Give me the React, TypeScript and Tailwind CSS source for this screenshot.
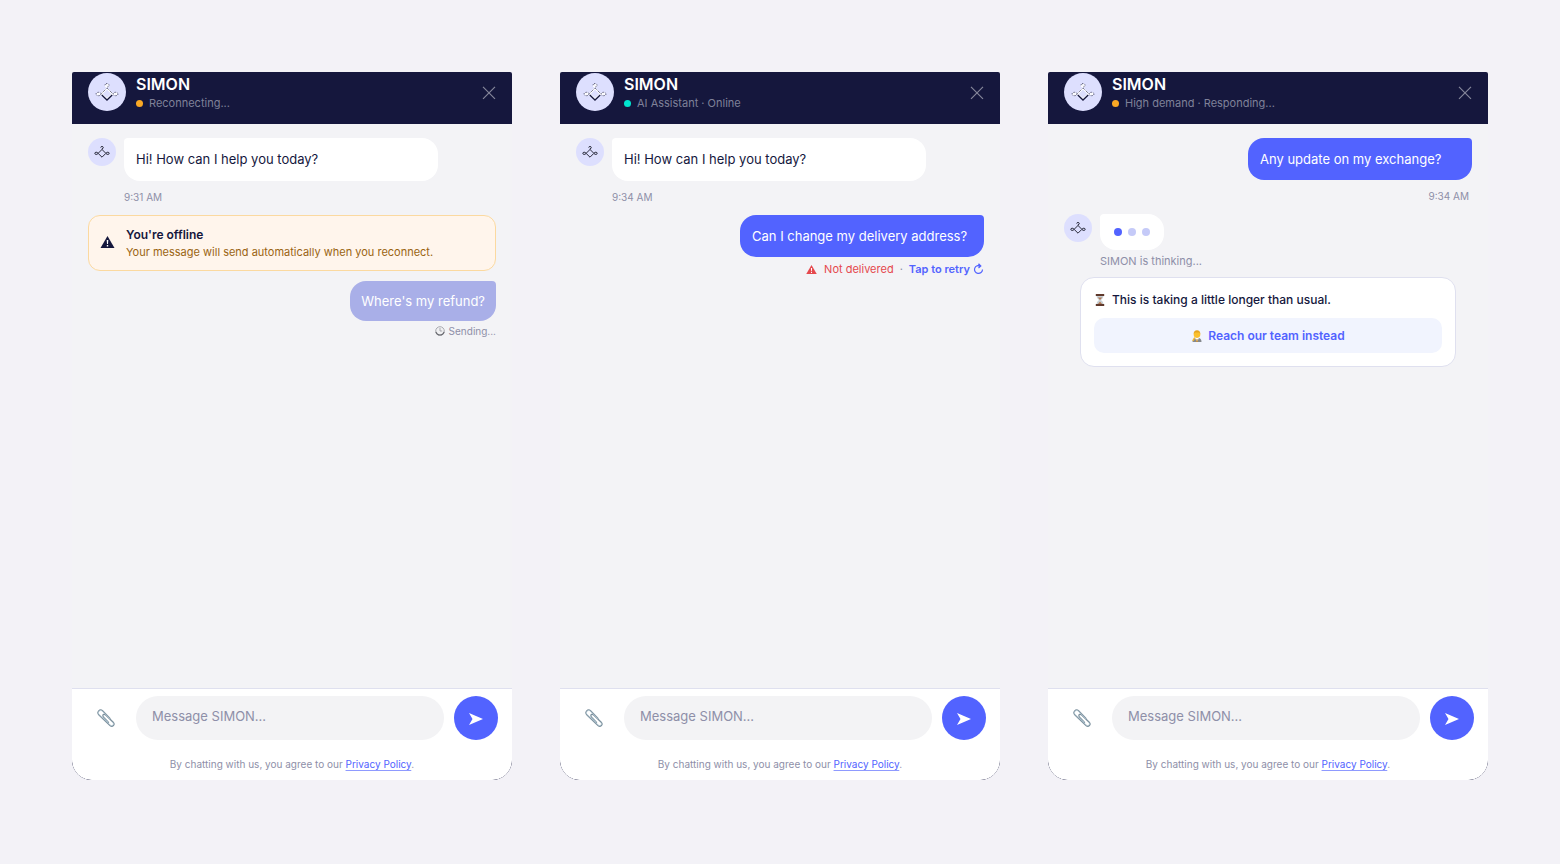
import type { ReactNode } from "react";
import clsx from "clsx";

type WidgetProps = {
  status: string;
  online?: boolean;
  children: ReactNode;
};

function Hanger({ className }: { className?: string }) {
  return (
    <svg viewBox="0 0 24 20" fill="none" stroke="#2a2b3c" strokeWidth="1.5" className={className}>
      <path d="M12 6.200 17.800 12 12 17.800 6.200 12z" />
      <path d="M12 6.200V5.200c1.300-.2 2-.9 2-1.800 0-1-.9-1.700-2-1.700s-2 .7-2 1.600" />
      <path d="M6.200 12c-1-1.300-2-1.700-3-1.700-1.200 0-2 .8-2 1.700s.8 1.700 2 1.700c1 0 2-.4 3-1.700z" />
      <path d="M17.800 12c1-1.300 2-1.700 3-1.700 1.200 0 2 .8 2 1.700s-.8 1.700-2 1.700c-1 0-2-.4-3-1.700z" />
    </svg>
  );
}

function HeaderLogo() {
  return (
    <svg viewBox="0 0 24 20" fill="none" className="w-6 h-5" aria-hidden="true">
      <g stroke="#fff" strokeWidth="1.600">
        <path d="M12 6.500 17.500 12 12 17 6.500 12z" />
        <ellipse cx="12" cy="3.500" rx="1.400" ry="1.200" />
        <ellipse cx="3.500" cy="12" rx="1.600" ry="1" />
        <ellipse cx="20.500" cy="12" rx="1.600" ry="1" />
      </g>
      <g stroke="#15173d" strokeWidth=".8" strokeDasharray="1 1">
        <path d="M6.500 11.500 12 6l5.500 5.500" />
        <path d="M10 3.200c0-1 .8-1.600 2-1.600s2 .6 2 1.600-1 1.700-2 2" />
        <ellipse cx="3.500" cy="12" rx="2.400" ry="1.700" />
        <ellipse cx="20.500" cy="12" rx="2.400" ry="1.700" />
      </g>
      <path d="M6.800 13 12 18l5.200-5" stroke="#15173d" strokeWidth="1.300" />
    </svg>
  );
}

function Warning({ className }: { className?: string }) {
  return (
    <svg viewBox="0 0 14 12" className={className} aria-hidden="true">
      <path d="M7 0 14 12H0z" fill="currentColor" />
      <path d="M6.200 4h1.600l-.3 4h-1zM6.300 9h1.400v1.500H6.300z" fill="#fff" />
    </svg>
  );
}

function Clip() {
  return (
    <svg viewBox="0 0 20 20" fill="none" strokeLinecap="round" className="w-5 h-5">
      <path
        d="M12.500 14.500 7.500 9C5.800 7 8 5.300 9.700 7l7.500 7.200c2.200 2.500-.7 5.300-3.200 3.200L3 7C.2 4 3.800.2 6.800 3l7.200 7.500"
        stroke="#7d919e"
        strokeWidth="1.300"
      />
      <path
        d="M16.800 14.500c1.700 2-.5 4-2.500 2.500L3.300 6.700C1 4 4.200 1.200 6.500 3.300l7 7.200M12 14 7.800 9"
        stroke="#c3d6e2"
        strokeWidth=".6"
      />
    </svg>
  );
}

function Clock() {
  return (
    <svg viewBox="0 0 10 10" fill="none" className="w-[10px] h-[10px]" aria-hidden="true">
      <circle cx="5" cy="5" r="4.300" fill="#f0f0f2" stroke="#a9aab0" strokeWidth="1" />
      <path d="M.9 6a4.300 4.300 0 0 0 8.200 0" stroke="#6d6e74" strokeWidth="1.100" />
      <path d="M5 2v3h2.200" stroke="#8d8e95" strokeWidth=".7" />
    </svg>
  );
}

function Hourglass() {
  return (
    <svg viewBox="0 0 10 12" className="w-[10px] h-3" aria-hidden="true">
      <path d="M1.500 1.500h7c0 2.500-1.300 3.500-2.600 4.500 1.300 1 2.600 2 2.600 4.500h-7C1.500 8 2.800 7 4.100 6 2.800 5 1.500 4 1.500 1.500z" fill="#c9d1d6" />
      <path d="M2.800 3.500h4.400L5 6zM5 7.500l2.500 3h-5z" fill="#b07a58" />
      <path d="M.8 0h8.400v2H.8zM.8 10h8.400v2H.8z" fill="#5f382b" />
    </svg>
  );
}

function Agent() {
  return (
    <svg viewBox="0 0 12 12" className="w-3 h-3" aria-hidden="true">
      <path d="M1.500 12c0-3 1.500-4.200 4.500-4.200s4.500 1.200 4.500 4.200z" fill="#85898e" />
      <path d="M4 7.800 6 12l2-4.200z" fill="#fff" />
      <path d="M5.500 9h1l.3 3H5.200z" fill="#c98a2b" />
      <circle cx="6" cy="4.600" r="3.300" fill="#fbc02d" />
      <path d="M2.700 4C2.500 1.500 4 .2 6 .2S9.500 1.500 9.300 4L8.200 2.400H4z" fill="#e3a320" />
      <path d="M1.800 10.800 3.800 7.500" stroke="#f5b82e" strokeWidth="1.400" />
    </svg>
  );
}

function BotAvatar() {
  return (
    <div className="w-7 h-7 shrink-0 rounded-full bg-[#dddffe] flex items-center justify-center">
      <Hanger className="w-4 h-[14px]" />
    </div>
  );
}

function BotMessage({ text, time }: { text: string; time: string }) {
  return (
    <div className="flex items-start gap-2 mb-[10px]">
      <BotAvatar />
      <div className="w-[314px]">
        <p className="bg-white rounded-2xl rounded-tl-sm px-3 py-3 text-[13px] leading-[19px] text-[#15173d]">
          {text}
        </p>
        <p className="mt-2 text-[10px] leading-4 text-[#8e8fa8]">{time}</p>
      </div>
    </div>
  );
}

function UserMessage({ text, className }: { text: string; className?: string }) {
  return (
    <p className={clsx("rounded-2xl rounded-tr-sm text-[13px] leading-[18px] text-white", className)}>
      {text}
    </p>
  );
}

function ChatWidget({ status, online, children }: WidgetProps) {
  return (
    <section className="flex-1 min-w-0 flex flex-col bg-[#15173d] rounded-t-[2px] rounded-b-[20px] overflow-hidden">
      <header className="h-13 shrink-0 px-4 pt-px flex items-start gap-[10px]">
        <div className="w-[38px] h-[38px] rounded-full bg-[#dddffe] flex items-center justify-center">
          <HeaderLogo />
        </div>
        <div className="flex-1">
          <h2 className="text-[16px] leading-[22px] font-semibold text-white">SIMON</h2>
          <p className="flex items-center gap-[6px] text-[11px] leading-4 text-[#7f8199]">
            <span className={clsx("w-[7px] h-[7px] rounded-full", online ? "bg-[#00e5cf]" : "bg-[#f9a825]")} />
            {status}
          </p>
        </div>
        <button type="button" aria-label="Close chat" className="w-[14px] h-10 flex items-center justify-center">
          <svg viewBox="0 0 14 14" fill="none" stroke="#85869a" strokeWidth="1.200" className="w-[14px] h-[14px]">
            <path d="M1 .8l12 12M13 .8 1 12.800" />
          </svg>
        </button>
      </header>

      <div className="flex-1 bg-[#f3f3f6] px-4 pt-[14px]">{children}</div>

      <form
        className="bg-white border-t border-[#dfe0ef] pt-[7px] pb-2 rounded-b-[19px]"
        onSubmit={(e) => e.preventDefault()}
      >
        <div className="flex items-center gap-[10px] px-[14px]">
          <button type="button" aria-label="Attach a file" className="w-10 h-11 flex items-center justify-center">
            <Clip />
          </button>
          <input
            type="text"
            aria-label="Message SIMON"
            placeholder="Message SIMON..."
            className="flex-1 min-w-0 h-11 rounded-full bg-[#f3f3f5] px-4 pb-1 text-[13px] text-[#15173d] placeholder:text-[#8e8fa8] outline-none"
          />
          <button
            type="submit"
            aria-label="Send"
            className="w-11 h-11 shrink-0 rounded-full bg-[#5263ff] flex items-center justify-center"
          >
            <svg viewBox="0 0 14 12" fill="#fff" className="w-[14px] h-3 mt-px">
              <path d="M0 0 14 6 0 12 3.500 6z" />
            </svg>
          </button>
        </div>
        <p className="mt-4 text-center text-[10px] leading-4 text-[#8e8fa8]">
          By chatting with us, you agree to our{" "}
          <a href="#privacy" className="text-[#5263ff] underline decoration-[#8f9aff] underline-offset-2">
            Privacy Policy
          </a>
          .
        </p>
      </form>
    </section>
  );
}

export default function App() {
  return (
    <main className="min-h-screen bg-[#f3f2f7] font-['Inter',sans-serif] px-18 pt-18 pb-21 flex gap-12">
      <ChatWidget status="Reconnecting...">
        <BotMessage text="Hi! How can I help you today?" time="9:31 AM" />
        <div className="flex items-center gap-[11px] rounded-xl border border-[#fbd9a0] bg-[#fff5ec] px-[11px] pt-[10px] pb-[9px] mb-[10px]">
          <Warning className="w-[15px] h-3 mb-[3px] text-[#15173d]" />
          <div>
            <p className="text-[12px] leading-[17px] font-semibold text-[#15173d]">You're offline</p>
            <p className="text-[11px] leading-[18px] text-[#9a6412]">
              Your message will send automatically when you reconnect.
            </p>
          </div>
        </div>
        <div className="flex flex-col items-end">
          <UserMessage text="Where's my refund?" className="bg-[#a9afe8] px-[11px] py-[11px]" />
          <p className="mt-[2px] flex items-center gap-1 text-[10px] leading-4 text-[#8e8fa8]">
            <Clock />
            Sending...
          </p>
        </div>
      </ChatWidget>

      <ChatWidget status="AI Assistant · Online" online>
        <BotMessage text="Hi! How can I help you today?" time="9:34 AM" />
        <div className="flex flex-col items-end">
          <UserMessage text="Can I change my delivery address?" className="w-[244px] bg-[#5263ff] p-3" />
          <p className="mt-1 flex items-center text-[11px] leading-4 text-[#e5484d]">
            <Warning className="w-[11px] h-[9px] mr-[7px]" />
            Not delivered
            <span className="mx-[6px] text-[#8e8fa8]">·</span>
            <button type="button" className="flex items-center gap-[3px] font-semibold text-[#5263ff]">
              Tap to retry
              <svg viewBox="0 0 11 12" fill="none" stroke="currentColor" strokeWidth="1.200" className="w-[11px] h-3">
                <path d="M7.500 3A4 4 0 1 0 9.500 6.500M5.500 .8 7.800 3 5.500 5M7.500 3H4.500" />
              </svg>
            </button>
          </p>
        </div>
      </ChatWidget>

      <ChatWidget status="High demand · Responding...">
        <div className="flex flex-col items-end mb-[10px]">
          <UserMessage text="Any update on my exchange?" className="w-[224px] bg-[#5263ff] p-3" />
          <p className="mt-2 mr-[3px] text-[10px] leading-4 text-[#8e8fa8]">9:34 AM</p>
        </div>
        <div className="flex items-start gap-2">
          <BotAvatar />
          <div>
            <div className="w-16 h-9 rounded-2xl rounded-tl-sm bg-white flex items-center justify-center gap-[6px]">
              <span className="w-2 h-2 rounded-full bg-[#5263ff]" />
              <span className="w-2 h-2 rounded-full bg-[#c5caf8]" />
              <span className="w-2 h-2 rounded-full bg-[#c5caf8]" />
            </div>
            <p className="mt-[3px] text-[11px] leading-4 text-[#8e8fa8]">SIMON is thinking...</p>
          </div>
        </div>
        <div className="mt-2 mx-4 rounded-[14px] border border-[#dfe0ef] bg-white p-[13px]">
          <p className="flex items-center gap-[6px] mb-[10px] text-[12px] leading-[17px] font-medium text-[#15173d]">
            <span className="w-3 flex justify-center">
              <Hourglass />
            </span>
            This is taking a little longer than usual.
          </p>
          <button
            type="button"
            className="w-full h-[35px] rounded-[10px] bg-[#f1f4fe] flex items-center justify-center gap-[5px] text-[12px] font-semibold text-[#5263ff]"
          >
            <Agent />
            Reach our team instead
          </button>
        </div>
      </ChatWidget>
    </main>
  );
}
